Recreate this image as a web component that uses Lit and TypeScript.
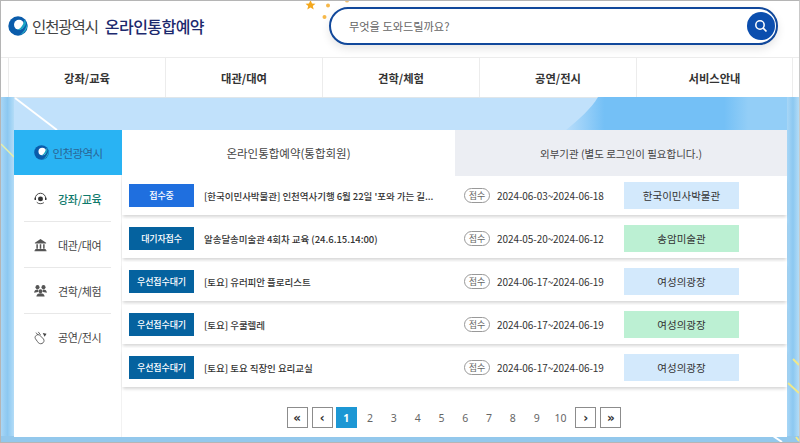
import { LitElement, html, css, svg } from "lit";
import { customElement } from "lit/decorators.js";

const rows = [
  { badge: "접수중", cls: "b1", title: "[한국이민사박물관] 인천역사기행 6월 22일 '포와 가는 길...", date: "2024-06-03~2024-06-18", org: "한국이민사박물관", oc: "blue" },
  { badge: "대기자접수", cls: "b2", title: "알송달송미술관 4회차 교육 (24.6.15.14:00)", date: "2024-05-20~2024-06-12", org: "송암미술관", oc: "green" },
  { badge: "우선접수대기", cls: "b2", title: "[토요] 유러피안 플로리스트", date: "2024-06-17~2024-06-19", org: "여성의광장", oc: "blue" },
  { badge: "우선접수대기", cls: "b2", title: "[토요] 우쿨렐레", date: "2024-06-17~2024-06-19", org: "여성의광장", oc: "green" },
  { badge: "우선접수대기", cls: "b2", title: "[토요] 토요 직장인 요리교실", date: "2024-06-17~2024-06-19", org: "여성의광장", oc: "blue" },
];

const logo = (size: number) => html`<svg width=${size} height=${size} viewBox="0 0 20 20">
  <circle cx="10" cy="10" r="9.700" fill="#0a5cab"/>
  <circle cx="11" cy="8.800" r="5" fill="#fff"/>
  <path d="M16.500 3.500c1 1.200 1.500 2.700 1.500 4.200-1.500 4.300-5 6.800-9.500 6.300 3.200-.6 6.700-3.800 8-10.500z" fill="#19a3c4"/>
  <path d="M19.300 7.500c.6 5-2.500 9.500-7.300 11.500 3.300-2.600 6-6.500 7.300-11.500z" fill="#29b6c8"/>
</svg>`;

const icons = [
  svg`<path d="M3 10a7 7 0 0 1 14 0" fill="none" stroke="#444" stroke-width="1.300"/><circle cx="10" cy="10.500" r="3.300" fill="#333"/><path d="M3 9v3M17 9v3" stroke="#333" stroke-width="2"/><path d="M5 15c2 2.500 7 2.500 9.500 .5" fill="none" stroke="#444" stroke-width="1.200"/>`,
  svg`<path d="M10 2.500 2.500 7.500v1h15v-1z" fill="#555"/><path d="M4.500 9.500h2v6h-2zM9 9.500h2v6H9zM13.500 9.500h2v6h-2z" fill="#555"/><path d="M3 16h14v1.500H3zM2 17.500h16V19H2z" fill="#555"/>`,
  svg`<circle cx="6" cy="5.500" r="2.700" fill="#555"/><circle cx="14" cy="5.500" r="2.700" fill="#555"/><circle cx="10" cy="11" r="2.600" fill="#555"/><path d="M1.500 13c0-3 2-4.500 4.500-4.500l1.200 .5-.5 3zM18.500 13c0-3-2-4.500-4.500-4.500l-1.200 .5.500 3zM4.500 18c0-3 2.500-4.500 5.500-4.500s5.500 1.500 5.500 4.500z" fill="#555"/>`,
  svg`<path d="M3 8.500c2-2 4-3 5.500-2l5.500 5.500c1.500 2 .5 5-2 6-2.500 1-5-.5-6-2.500L3.500 12c-.8-1.200-1-2.500-.5-3.500z" fill="none" stroke="#555" stroke-width="1.200"/><path d="M4 3.500 7 7M7 2.500l3 4" stroke="#555" stroke-width="1.200"/><path d="m13 4 5 1-2.500 4z" fill="#444"/>`,
];

@customElement("app-root")
export class AppRoot extends LitElement {
  static styles = css`
    :host { display: block; width: 800px; height: 443px; overflow: hidden; font-family: "Noto Sans CJK KR", "Noto Sans", sans-serif; color: #333; }
    .page { width: 800px; height: 443px; box-sizing: border-box; border: 1px solid #b5b5b5; border-right-color: #c9c9c9; display: flex; flex-direction: column; position: relative; overflow: hidden; background: #fff; }
    .top { height: 56px; display: flex; align-items: center; flex: none; position: relative; }
    .brand { display: flex; align-items: center; margin-left: 7px; width: 321px; flex: none; margin-top: -7px; }
    .brand svg { flex: none; }
    .city { font-size: 15.500px; color: #444; margin-left: 4px; letter-spacing: -1.1px; }
    .svc { font-size: 16px; font-weight: 500; color: #1d2a6e; margin-left: 7px; letter-spacing: -.55px; }
    .search { width: 449px; height: 38px; box-sizing: border-box; border: 2px solid #11489b; border-radius: 19px; display: flex; align-items: center; justify-content: space-between; padding: 0 1px 0 18px; box-shadow: 0 4px 8px rgba(0,0,0,.1); background: #fff; margin-top: -7px; }
    .search span { font-size: 11.200px; color: #666; }
    .go { width: 28px; height: 28px; border-radius: 50%; background: #0b4eae; display: flex; align-items: center; justify-content: center; }
    .star { position: absolute; }
    nav { display: flex; height: 40px; flex: none; padding-left: 7px; border-top: 1px solid #ececec; box-sizing: border-box; }
    nav div { width: 157px; flex: none; box-sizing: border-box; border-left: 1px solid #ececec; display: flex; align-items: center; justify-content: center; font-size: 11.300px; font-weight: 700; color: #333; }
    nav div:last-child { border-right: 1px solid #ececec; }
    .stage { flex: 1; position: relative; padding: 33px 12px 5px 13px; display: flex; background: #c1e1fb; box-shadow: inset 0 1px 0 #dfe6ea; min-height: 0; overflow: hidden; }
    .deco { position: absolute; inset: 0; width: 100%; height: 100%; }
    .side { width: 108px; flex: none; background: #fff; position: relative; display: flex; flex-direction: column; border-right: 1px solid #f2f2f2; box-sizing: border-box; }
    .side-head { height: 45px; background: #29b3f3; display: flex; align-items: center; justify-content: center; gap: 4px; font-size: 11.500px; color: #2a6595; letter-spacing: -.6px; margin-bottom: 1px; margin-right: -1px; }
    .side-item { height: 46px; margin: 0 10px; border-bottom: 1px solid #e8e8e8; display: flex; align-items: center; gap: 10px; padding-left: 9px; box-sizing: border-box; font-size: 11px; color: #444; letter-spacing: -.3px; }
    .side-item:last-child { border-bottom: 0; }
    .side-item.on { color: #0f7a6c; font-weight: 500; }
    .main { flex: 1; background: #fff; position: relative; display: flex; flex-direction: column; min-width: 0; }
    .tabs { display: flex; height: 46px; flex: none; }
    .tab { flex: none; display: flex; align-items: center; justify-content: center; color: #444; }
    .tab.a { width: 333px; font-size: 11.500px; }
    .tab.b { width: 332px; background: #eceef3; font-size: 10.500px; }
    .row { height: 39px; margin-bottom: 4px; display: flex; align-items: center; background: #fff; box-shadow: 0 3px 3px -1px rgba(0,0,0,.16); padding-left: 7px; flex: none; }
    .badge { width: 65px; height: 23px; flex: none; display: flex; align-items: center; justify-content: center; color: #fff; font-size: 9px; font-weight: 500; letter-spacing: -.15px; }
    .b1 { background: #1f6fdf; }
    .b2 { background: #05629f; }
    .title { width: 260px; flex: none; margin-left: 10px; font-size: 9.500px; font-weight: 500; color: #333; white-space: nowrap; overflow: hidden; letter-spacing: -.04px; }
    .tag { width: 26px; height: 15px; box-sizing: border-box; flex: none; border: 1px solid #999; border-radius: 8px; display: flex; align-items: center; justify-content: center; font-size: 9px; color: #666; }
    .date { margin-left: 7px; width: 127px; flex: none; font-size: 10px; color: #333; letter-spacing: -.07px; white-space: nowrap; }
    .org { width: 115px; height: 27px; flex: none; display: flex; align-items: center; justify-content: center; font-size: 10.500px; color: #333; }
    .blue { background: #d3e9fc; }
    .green { background: #bcf0d3; }
    .pager { display: flex; align-items: center; justify-content: center; margin-top: 16px; padding-right: 1px; }
    .pb { width: 21px; height: 21px; box-sizing: border-box; border: 1px solid #8c8c8c; display: flex; align-items: center; justify-content: center; font-size: 12px; font-weight: 700; color: #333; background: #fff; margin: 0 2px; font-family: "DejaVu Sans", sans-serif; }
    .n { width: 23.800px; height: 21px; display: flex; align-items: center; justify-content: center; font-size: 10.500px; color: #666; flex: none; font-family: "Noto Sans", sans-serif; }
    .n.cur { width: 21px; background: #1c97d4; color: #fff; font-weight: 700; margin-left: 1px; margin-right: 1.500px; }
    .n.ten { margin-right: 1px; }
  `;

  render() {
    return html`<div class="page">
      <div class="top">
        <div class="brand">
          ${logo(20)}
          <span class="city">인천광역시</span>
          <span class="svc">온라인통합예약</span>
        </div>
        <div class="search">
          <span>무엇을 도와드릴까요?</span>
          <div class="go"><svg width="14" height="14" viewBox="0 0 14 14"><circle cx="6" cy="6" r="4.200" fill="none" stroke="#fff" stroke-width="1.500"/><path d="m9.200 9.200 3.300 3.300" stroke="#fff" stroke-width="1.700"/></svg></div>
        </div>
        <svg class="star" style="left:302px;top:-1px" width="52" height="22" viewBox="0 0 52 22">
          <path d="M7.500 0 9 3.500l3.500.3-2.700 2.300.9 3.400-3.200-1.900L4.300 9.500l.9-3.400L2.500 3.800 6 3.500z" fill="#f4a81d"/>
          <circle cx="25" cy="5.500" r="2" fill="#f6b84a"/>
          <circle cx="21.500" cy="17" r="2" fill="#f6b84a"/>
          <circle cx="44" cy="0.500" r="2" fill="#f0c070"/>
        </svg>
      </div>
      <nav>
        <div>강좌/교육</div><div>대관/대여</div><div>견학/체험</div><div>공연/전시</div><div>서비스안내</div>
      </nav>
      <div class="stage">
        <svg class="deco" viewBox="0 0 798 345" preserveAspectRatio="none">
          <defs>
            <linearGradient id="edge" x1="0" x2="1" y1="0" y2="0">
              <stop offset="0" stop-color="#a8d6f6"/><stop offset=".5" stop-color="#8cc8f1"/><stop offset="1" stop-color="#b3dcf7"/>
            </linearGradient>
            <linearGradient id="band" gradientUnits="userSpaceOnUse" x1="560" x2="800" y1="0" y2="0">
              <stop offset="0" stop-color="#74c0f6" stop-opacity="0"/>
              <stop offset=".18" stop-color="#74c0f6"/>
              <stop offset=".68" stop-color="#74c0f6"/>
              <stop offset=".78" stop-color="#93cef7"/>
              <stop offset="1" stop-color="#93cef7"/>
            </linearGradient>
          </defs>
          <path d="M597 0H798V33H565C578 22 590 12 597 0z" fill="url(#band)"/>
          <path d="M0 0H13V345H0z" fill="url(#edge)"/>
          <path d="M786 0H798V345H786z" fill="url(#edge)"/>
          <path d="M0 339H798V345H0z" fill="#93c8ec"/>
          <path d="M14 1 56 33" stroke="#fff" stroke-width="2"/>
          <path d="M0 47 13 60" stroke="#e8f0a8" stroke-width="1.500"/>
          <path d="M792 262 798 268M787 286 798 296M795 340 798 344" stroke="#efe88a" stroke-width="2"/>
          <path d="M772 339 781 345" stroke="#fff" stroke-width="2"/>
        </svg>
        <div class="side">
          <div class="side-head">${logo(15)}<span>인천광역시</span></div>
          ${["강좌/교육", "대관/대여", "견학/체험", "공연/전시"].map((t, i) => html`<div class="side-item ${i === 0 ? "on" : ""}"><svg width="15" height="15" viewBox="0 0 20 20">${icons[i]}</svg><span>${t}</span></div>`)}
        </div>
        <div class="main">
          <div class="tabs"><div class="tab a">온라인통합예약(통합회원)</div><div class="tab b">외부기관 (별도 로그인이 필요합니다.)</div></div>
          ${rows.map((r) => html`<div class="row">
            <div class="badge ${r.cls}">${r.badge}</div>
            <div class="title">${r.title}</div>
            <div class="tag">접수</div>
            <div class="date">${r.date}</div>
            <div class="org ${r.oc}">${r.org}</div>
          </div>`)}
          <div class="pager">
            <div class="pb">«</div><div class="pb">‹</div>
            <div class="n cur">1</div>
            ${[2, 3, 4, 5, 6, 7, 8, 9, 10].map((n) => html`<div class="n ${n === 10 ? "ten" : ""}">${n}</div>`)}
            <div class="pb">›</div><div class="pb">»</div>
          </div>
        </div>
      </div>
    </div>`;
  }
}
